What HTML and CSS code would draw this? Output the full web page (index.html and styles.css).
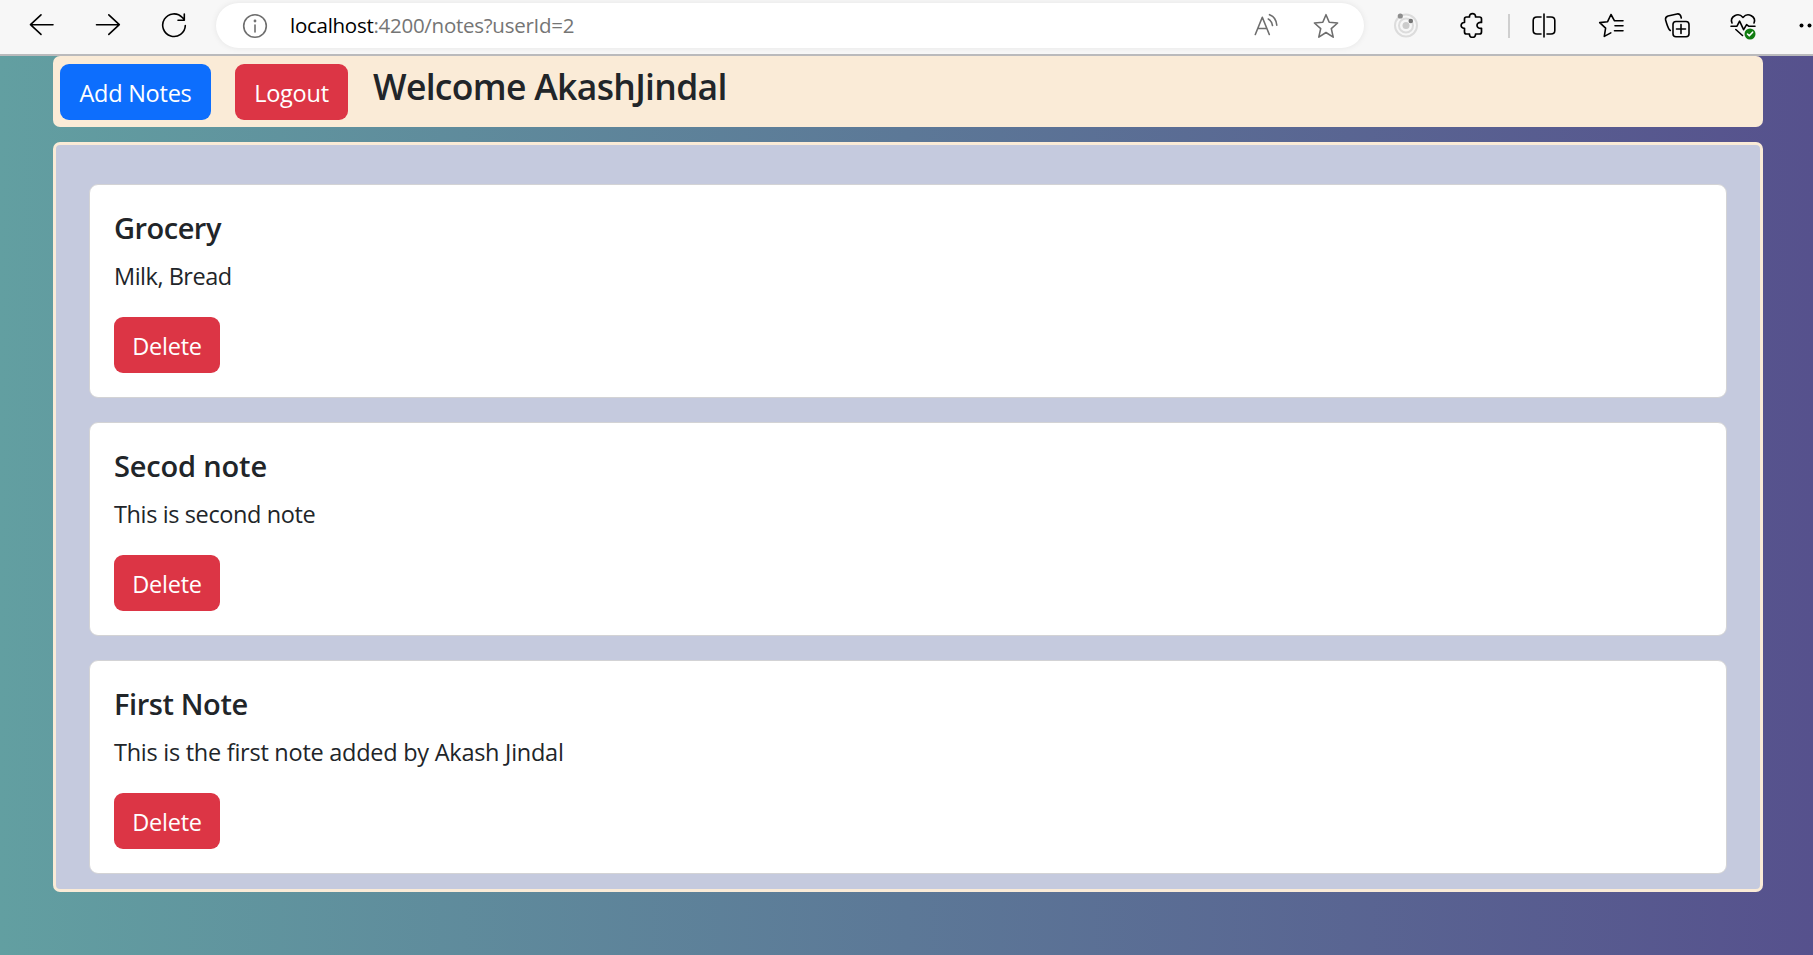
FILE: index.html
```html
<!DOCTYPE html>
<html lang="en">
<head>
<meta charset="utf-8">
<title>Notes</title>
<link rel="stylesheet" href="styles.css">
</head>
<body>
<div class="toolbar">
  <div class="nav">
    <svg class="icon" viewBox="0 0 26 26"><path d="M24 12.700H1.500M12 2.800L1.500 12.700 12 22.400"/></svg>
    <svg class="icon" viewBox="0 0 26 26"><path d="M1.500 12.700H24.300M13.800 2.800l10.500 9.900-10.500 9.700"/></svg>
    <svg class="icon" viewBox="0 0 26 26"><path d="M24.300 13.500A11.300 11.300 0 1 1 21.300 5.500L23 7.300M23.300 2v6.300H17"/></svg>
  </div>
  <div class="address">
    <svg class="icon gray info" viewBox="0 0 26 26"><circle cx="13" cy="13" r="11.3"/><path d="M13 12v7"/><circle cx="13" cy="8" r=".6"/></svg>
    <span class="url"><b>localhost</b>:4200/notes?userId=2</span>
    <svg class="icon gray read" viewBox="0 0 26 26"><path d="M2.300 21.500L9.300 4.300l7 17.200M5 15.500h8.600M15.300 6c2.200 1.200 3.700 3.500 4.200 6.500M16.500 1.700c4 1.500 6.900 5.300 7.300 10.600"/></svg>
    <svg class="icon gray" viewBox="0 0 26 26"><path d="M13 1.700l3.200 7.600 8.400.7-6.300 5.600 1.900 8.500L13 19.500l-7.200 4.600 1.900-8.500L1.400 10l8.400-.7z"/></svg>
  </div>
  <div class="tools">
    <svg class="icon orbit" viewBox="0 0 26 26"><circle class="ring" cx="13" cy="13.500" r="11"/><circle class="ring" cx="13" cy="13.500" r="7"/><circle class="core" cx="13" cy="13.500" r="3.500"/><circle class="moon" cx="7.300" cy="4" r="2.600"/><circle class="moon dark" cx="17.800" cy="9" r="2.300"/></svg>
    <svg class="icon puzzle" viewBox="0 0 26 26"><path d="M5.500 7q0-2 2-2h3c-.5-4.500 6.500-4.500 6 0h4q2 0 2 2v3.500c-6-1-6 6.500 0 5.800V20q0 2-2 2h-4c.5 4.500-6.500 4.500-6 0h-3q-2 0-2-2v-3.700c-4.500.3-4.500-6.100 0-5.800z"/></svg>
    <span class="divider"></span>
    <svg class="icon split" viewBox="0 0 26 26"><path d="M10 5H6Q2.200 5 2.200 8.500v10Q2.200 22 6 22h4M16 5h4q3.800 0 3.800 3.500v10Q23.800 22 20 22h-4M13 2v23"/></svg>
    <svg class="icon favs" viewBox="0 0 26 26"><path d="M25 13.800h-8M25 8.800h-8.500L13 2.500l-3.400 7.200-7.900.9 5.900 5.500-1.300 8.300 6.500-3.500M25 18.800h-8.500"/></svg>
    <svg class="icon colls" viewBox="0 0 26 26"><rect x="9" y="9.500" width="16" height="15.200" rx="3"/><path d="M17 12.500v9M12.500 17h9M6.300 18.500C4 17 3.500 14 1.600 8Q1 5 4 4L13 2Q16.500 1.300 17.300 6"/></svg>
    <svg class="icon health" viewBox="0 0 26 26"><path d="M2 11C-.5 5 8-.5 13 5.500 18-.5 26.500 5 24 11M1 14.200h6l2.600-5 4 8.500 3-5 2 1.500H25M5.800 17.500l6.700 6"/><circle class="badge" cx="20" cy="22" r="5.500"/><path class="tick" d="M17.500 22l1.800 1.800 3.300-3.600"/></svg>
    <svg class="icon dots" viewBox="0 0 26 26"><circle cx="5.500" cy="13.500" r="2"/><circle cx="13.500" cy="13.500" r="2"/><circle cx="21.500" cy="13.500" r="2"/></svg>
  </div>
</div>
<main class="page">
  <header class="header">
    <button class="btn primary">Add Notes</button>
    <button class="btn danger logout">Logout</button>
    <h1 class="welcome">Welcome AkashJindal</h1>
  </header>
  <section class="notes">
    <article class="card grocery">
      <h2 class="title">Grocery</h2>
      <p class="text">Milk, Bread</p>
      <button class="btn danger">Delete</button>
    </article>
    <article class="card second">
      <h2 class="title">Secod note</h2>
      <p class="text">This is second note</p>
      <button class="btn danger">Delete</button>
    </article>
    <article class="card first">
      <h2 class="title">First Note</h2>
      <p class="text">This is the first note added by Akash Jindal</p>
      <button class="btn danger">Delete</button>
    </article>
  </section>
</main>
</body>
</html>
```
FILE: styles.css
```css
* { box-sizing: border-box; }
body {
  margin: 0;
  height: 955px;
  overflow: hidden;
  display: flex;
  flex-direction: column;
  font-family: "Open Sans", "Noto Sans", sans-serif;
  color: #212529;
}
.toolbar {
  height: 56px;
  flex: none;
  display: flex;
  background: #f7f7f7;
  border-bottom: 2px solid #bababc;
  overflow: hidden;
}
.icon {
  width: 26px;
  height: 26px;
  flex: none;
  fill: none;
  stroke: #000;
  stroke-width: 1.6;
  stroke-linecap: round;
  stroke-linejoin: round;
}
.gray { stroke: #6e6e6e; }
.nav { display: flex; gap: 40px; padding: 12px 0 0 29px; width: 216px; flex: none; }
.address {
  width: 1148px;
  height: 45px;
  margin-top: 3px;
  flex: none;
  display: flex;
  align-items: center;
  padding: 0 25px 0 26px;
  border-radius: 23px;
  background: #fff;
  box-shadow: 0 0 6px rgba(0, 0, 0, .08);
}
.url {
  margin-left: 22px;
  padding-bottom: 2px;
  font-size: 20.5px;
  color: #757575;
  letter-spacing: -.27px;
  white-space: nowrap;
}
.url b { font-weight: 400; color: #000; }
.read { margin-left: auto; margin-right: 34px; }
.tools { display: flex; padding: 12px 0 0 29px; flex: none; }
.orbit { stroke: #dcdcdc; stroke-width: 2; }
.core { fill: #ccc; stroke: none; }
.moon { fill: #8d8d8d; stroke: none; }
.dark { fill: #757575; }
.puzzle { margin-left: 40px; stroke-width: 1.7; }
.divider { width: 2px; height: 24px; margin: 2px 0 0 23px; background: #cfcfcf; }
.split { margin-left: 21px; }
.favs { margin-left: 41px; }
.colls { margin-left: 40px; }
.health { margin-left: 40px; overflow: visible; }
.badge { fill: #107c10; stroke: none; }
.tick { stroke: #fff; }
.dots { margin-left: 40px; fill: #000; stroke: none; }

.page {
  flex: 1;
  padding: 0 50px 0 53px;
  background: linear-gradient(to right, #629fa1, #56518d);
}
.header {
  height: 71px;
  display: flex;
  align-items: flex-start;
  padding: 8px 7px;
  border-radius: 7px;
  background: #faebd7;
}
.btn {
  height: 56px;
  padding: 2px 0 0;
  width: 106px;
  border: 0;
  border-radius: 9px;
  font: 400 23.5px/50px "Open Sans", "Noto Sans", sans-serif;
  letter-spacing: -.25px;
  color: #fff;
  white-space: nowrap;
}
.primary { width: 151px; background: #0d6efd; }
.danger { background: #dc3545; }
.logout { width: 113px; margin-left: 24px; }
.welcome {
  margin: 0 0 0 25px;
  font-size: 35.5px;
  line-height: 45px;
  font-weight: 600;
  letter-spacing: -.68px;
  white-space: nowrap;
}
.notes {
  height: 750px;
  margin-top: 15px;
  padding: 39px 33px 0;
  display: flex;
  flex-direction: column;
  gap: 24px;
  border: 3px solid #faebd7;
  border-radius: 7px;
  background: #c5cade;
}
.card {
  height: 214px;
  padding: 24px 24px 0;
  border: 1px solid #d3d3d5;
  border-radius: 9px;
  background: #fff;
}
.title { margin: 0; font-size: 29px; line-height: 38px; font-weight: 600; }
.text { margin: 11px 0 23px; font-size: 23.5px; line-height: 36px; }
.grocery .title { letter-spacing: -.5px; }
.grocery .text { letter-spacing: -.48px; }
.second .title { letter-spacing: -.17px; }
.second .text { letter-spacing: -.38px; }
.first .title { letter-spacing: -.4px; }
.first .text { letter-spacing: -.26px; }
```
